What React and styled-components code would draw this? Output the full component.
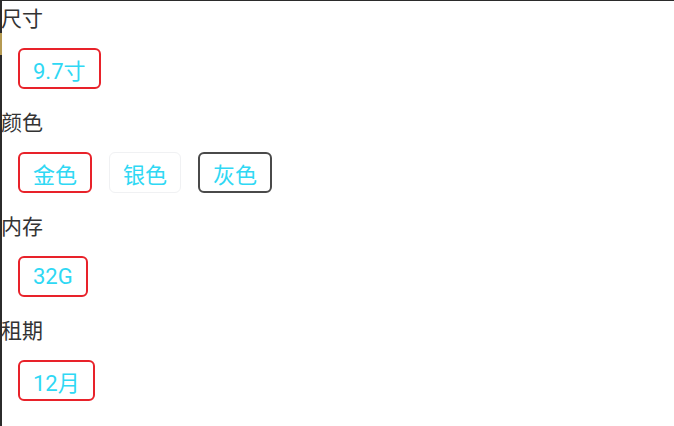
import React from "react";
import styled, { createGlobalStyle } from "styled-components";

const GlobalStyle = createGlobalStyle`
  html, body {
    margin: 0;
    padding: 0;
    background: #fff;
  }
  body {
    font-family: "Noto Sans CJK SC", Roboto, "Noto Sans", sans-serif;
  }
`;

const Page = styled.div`
  position: relative;
  box-sizing: border-box;
  height: 426px;
  border-left: 2px solid #2b2b2b;
  border-top: 1px solid #2b2b2b;
  background: #fff;

  &::before {
    content: "";
    position: absolute;
    left: -2px;
    top: 32px;
    width: 2px;
    height: 22px;
    background: #b59a52;
  }
`;

const Section = styled.div`
  display: flex;
  flex-direction: column;
`;

const Label = styled.div`
  font-size: 21px;
  line-height: 32px;
  color: #333;
  margin-left: -1px;
`;

const Options = styled.div`
  display: flex;
  gap: 17px;
  padding: 15px 0 16px 16px;
`;

const borders = {
  selected: "#e8222a",
  disabled: "#f0f1f3",
  normal: "#4a4a4a",
};

const Option = styled.div`
  box-sizing: border-box;
  height: 41px;
  padding: 0 13px;
  display: flex;
  align-items: center;
  border: 2px solid ${(p) => borders[p.$state]};
  border-width: ${(p) => (p.$state === "disabled" ? "1px" : "2px")};
  border-radius: 6px;
  font-family: Roboto, "Noto Sans CJK SC", sans-serif;
  font-size: 22px;
  color: #2fd8f4;
`;

const specs = [
  { label: "尺寸", options: [{ text: "9.7寸", state: "selected" }] },
  {
    label: "颜色",
    options: [
      { text: "金色", state: "selected" },
      { text: "银色", state: "disabled" },
      { text: "灰色", state: "normal" },
    ],
  },
  { label: "内存", options: [{ text: "32G", state: "selected" }] },
  { label: "租期", options: [{ text: "12月", state: "selected" }] },
];

const App = () => {
  return (
    <>
      <GlobalStyle />
      <Page>
        {specs.map((s) => (
          <Section key={s.label}>
            <Label>{s.label}</Label>
            <Options>
              {s.options.map((o) => (
                <Option key={o.text} $state={o.state}>
                  {o.text}
                </Option>
              ))}
            </Options>
          </Section>
        ))}
      </Page>
    </>
  );
};

export default App;
